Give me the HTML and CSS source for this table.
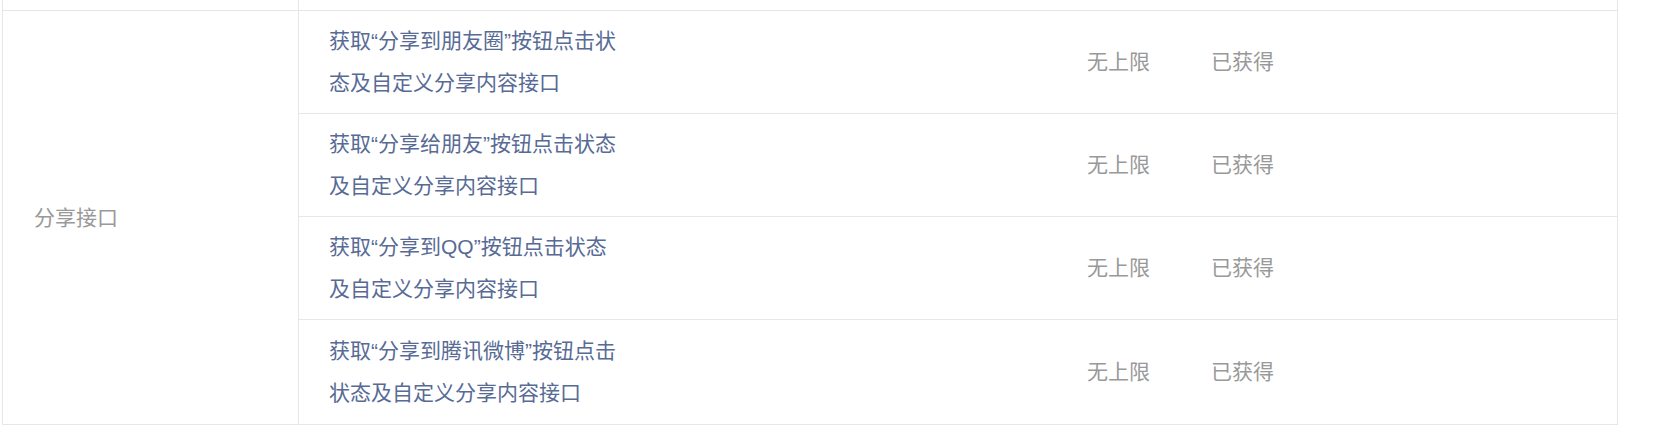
FILE: index.html
```html
<!DOCTYPE html>
<html lang="zh-CN">
<head>
<meta charset="utf-8">
<title>分享接口</title>
<link rel="stylesheet" href="styles.css">
</head>
<body>
<div class="table">
  <div class="row-prev">
    <div class="cell-cat"></div>
    <div class="cell-rest"></div>
  </div>
  <div class="group">
    <div class="cell-cat cat-label">分享接口</div>
    <div class="items">
      <div class="item">
        <div class="desc"><p>获取“分享到朋友圈”按钮点击状态及自定义分享内容接口</p></div>
        <div class="limit">无上限</div>
        <div class="status">已获得</div>
      </div>
      <div class="item">
        <div class="desc"><p>获取“分享给朋友”按钮点击状态及自定义分享内容接口</p></div>
        <div class="limit">无上限</div>
        <div class="status">已获得</div>
      </div>
      <div class="item">
        <div class="desc"><p>获取“分享到QQ”按钮点击状态及自定义分享内容接口</p></div>
        <div class="limit">无上限</div>
        <div class="status">已获得</div>
      </div>
      <div class="item">
        <div class="desc"><p>获取“分享到腾讯微博”按钮点击状态及自定义分享内容接口</p></div>
        <div class="limit">无上限</div>
        <div class="status">已获得</div>
      </div>
    </div>
  </div>
</div>
</body>
</html>
```
FILE: styles.css
```css
* {
  box-sizing: border-box;
}

html, body {
  margin: 0;
  padding: 0;
  background: #ffffff;
}

body {
  font-family: "Liberation Sans", "Noto Sans CJK SC", sans-serif;
  font-size: 21px;
  line-height: 42px;
  color: #999999;
  overflow: hidden;
}

.table {
  margin-left: 2px;
  width: 1616px;
  border-left: 1px solid #e7e7eb;
  border-right: 1px solid #e7e7eb;
}

.row-prev {
  display: flex;
  height: 11px;
  border-bottom: 1px solid #e7e7eb;
}

.cell-cat {
  flex: 0 0 296px;
  border-right: 1px solid #e7e7eb;
}

.cell-rest {
  flex: 1;
}

.group {
  display: flex;
  border-bottom: 1px solid #e7e7eb;
}

.cat-label {
  display: flex;
  align-items: center;
  padding-left: 31px;
  color: #999999;
}

.items {
  flex: 1;
  display: flex;
  flex-direction: column;
}

.item {
  display: flex;
  align-items: center;
  padding: 9px 0;
  height: 103px;
  border-bottom: 1px solid #e7e7eb;
}

.item:last-child {
  border-bottom: none;
  height: 104px;
}

.desc {
  flex: 0 0 758px;
  padding-left: 30px;
}

.desc p {
  margin: 0;
  width: 291px;
  color: #576b95;
}

.limit {
  flex: 0 0 124px;
  padding-left: 30px;
  color: #999999;
}

.status {
  flex: 1;
  padding-left: 30px;
  color: #999999;
}
```
